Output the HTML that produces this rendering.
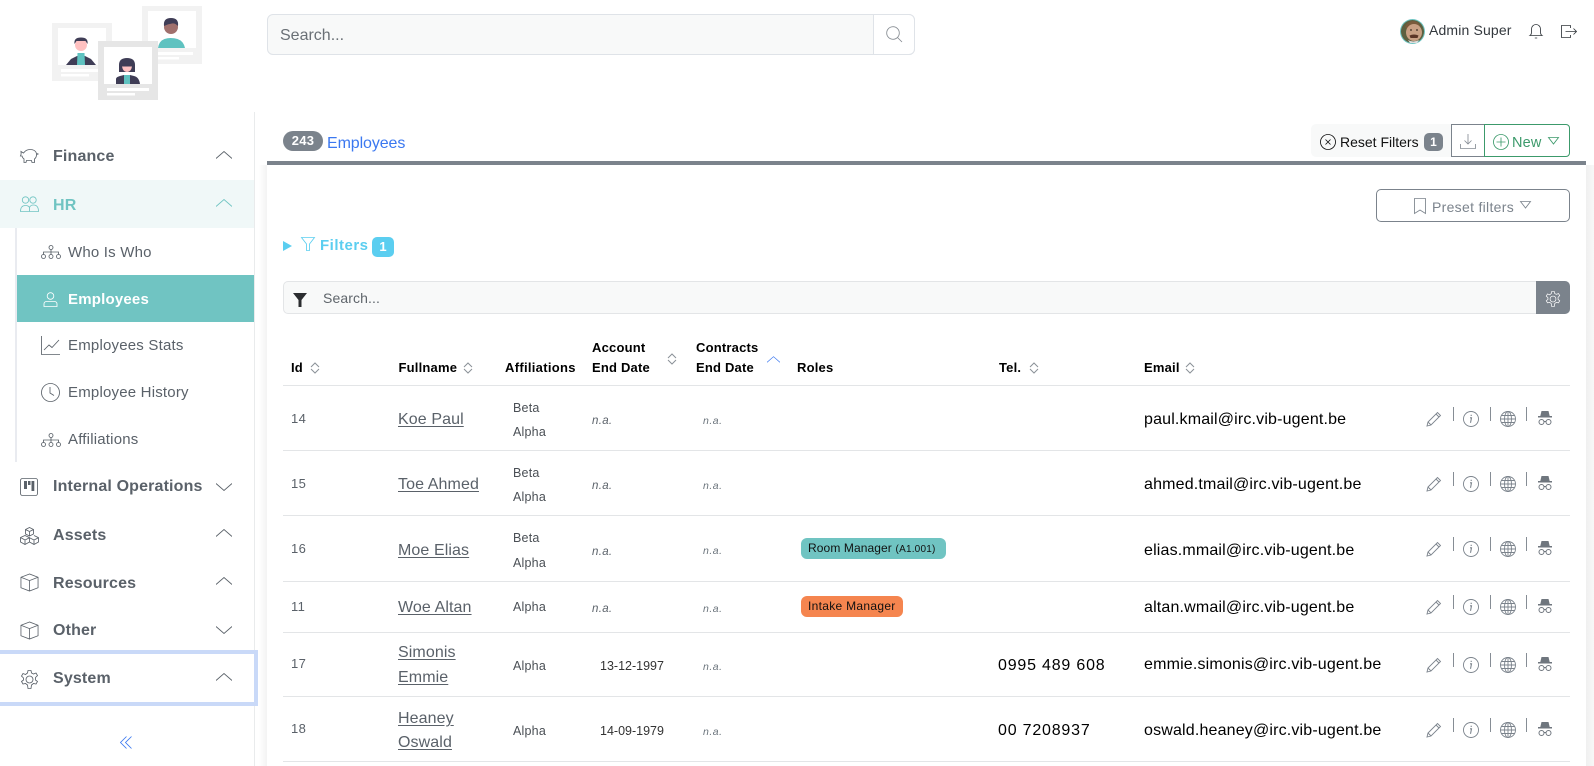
<!DOCTYPE html>
<html lang="en"><head><meta charset="utf-8"><title>Employees</title>
<style>
*{box-sizing:border-box}
html,body{margin:0;padding:0;background:#fff}
body{width:1594px;height:766px;overflow:hidden;position:relative;font-family:"Liberation Sans",sans-serif;color:#000}
.a{position:absolute}
.t{position:absolute;white-space:nowrap;line-height:20px;height:20px}
svg.i{position:absolute;fill:none;stroke:currentColor;stroke-width:.85;overflow:visible}
.m{font-weight:700;font-size:16px;color:#5a6169;left:53px;letter-spacing:.15px;transform:translateY(1px)}
.s{font-size:15px;color:#5a6169;left:68px;letter-spacing:.2px;transform:translateY(1px)}
.h{font-weight:700;font-size:13px;color:#000;letter-spacing:.2px}
.id{font-size:13px;color:#5a6169;left:291px;letter-spacing:.4px}
.n{font-size:16px;color:#5a6169;left:398px;text-decoration:underline;text-underline-offset:2px;letter-spacing:.1px;transform:translateY(1px)}
.af{font-size:12.5px;color:#4a4f55;left:513px;letter-spacing:.2px}
.na{font-size:11.5px;font-style:italic;color:#5a6169;left:592px;letter-spacing:.3px;transform:translateY(1px)}
.na2{font-size:10.5px;font-style:italic;color:#6c757d;left:703px;letter-spacing:.5px}
.d{font-size:12.5px;color:#333;left:600px;letter-spacing:0;transform:translateY(1px)}
.e{font-size:16px;color:#000;left:1144px;letter-spacing:.17px;transform:translateY(1px)}
.tel{font-size:16px;color:#000;left:998px;letter-spacing:.8px;transform:translateY(1px)}
.ln{position:absolute;left:283px;width:1287px;height:1px;background:#e3e5e7}
.sp{position:absolute;width:1px;height:14px;background:#868d95}
.b{position:absolute;left:801px;height:21px;border-radius:6px;font-size:12px;line-height:21px;padding-left:7px;color:#111;white-space:nowrap;letter-spacing:.3px}
</style></head><body>
<svg width="0" height="0" style="position:absolute">
<defs>
<symbol id="up" viewBox="0 0 16 8"><path d="M0 7.500 8 .5l8 7" fill="none" stroke="currentColor"/></symbol>
<symbol id="dn" viewBox="0 0 16 8"><path d="M0 .5l8 7 8-7" fill="none" stroke="currentColor"/></symbol>
<symbol id="sort" viewBox="0 0 10 12"><path d="M1 5 5 1l4 4M1 7l4 4 4-4" fill="none" stroke="#8b9197"/></symbol>
<symbol id="org" viewBox="0 0 20 14"><g fill="none" stroke="currentColor"><circle cx="10" cy="2.500" r="2"/><circle cx="2.500" cy="11.500" r="2"/><circle cx="10" cy="11.500" r="2"/><circle cx="17.500" cy="11.500" r="2"/><path d="M10 4.500v5M2.500 9.500V7h15v2.500"/></g></symbol>
<symbol id="box" viewBox="0 0 20 20"><path d="M10 1 1 4.500v11L10 19l9-3.500v-11zM1 4.500 10 8l9-3.500M10 8v11" fill="none" stroke="currentColor"/></symbol>
<symbol id="pen" viewBox="0 0 16 16"><path d="M1 15l1-4L11.500 1.500l3 3L5 14zM2 11l3 3M10 3l3 3" fill="none" stroke="#7b838c" stroke-width=".9"/></symbol>
<symbol id="inf" viewBox="0 0 16 16"><circle cx="8" cy="8" r="7.500" fill="none" stroke="#7b838c" stroke-width=".9"/><path d="M7 6.800h1.500L7.500 11.800M8.200 3.800v1.200" fill="none" stroke="#7b838c" stroke-width="1.100"/></symbol>
<symbol id="glb" viewBox="0 0 16 16"><g fill="none" stroke="#7b838c" stroke-width=".9"><circle cx="8" cy="8" r="7.500"/><ellipse cx="8" cy="8" rx="3.500" ry="7.500"/><path d="M8 .5v15M.5 8h15M1.500 4.500h13M1.500 11.500h13"/></g></symbol>
<symbol id="spy" viewBox="0 0 14 14"><path d="M3.500 0h7l1.200 5H14v1.500H0V5h2.300z" fill="#6f767e"/><g fill="none" stroke="#6f767e"><circle cx="3.500" cy="11" r="2.500"/><circle cx="10.500" cy="11" r="2.500"/><path d="M6 10.500h2"/></g></symbol>
</defs></svg>

<!-- logo -->
<svg class="a" style="left:52px;top:6px;filter:blur(.35px)" width="152" height="96" viewBox="0 0 152 96">
<rect x="90" y="0" width="60" height="58" fill="#f2f2f2"/><rect x="96" y="5" width="48" height="37" fill="#fff"/>
<rect x="96" y="46" width="45" height="3" fill="#fff"/><rect x="96" y="51" width="31" height="2.500" fill="#fff"/>
<circle cx="119" cy="21" r="7" fill="#a0706d"/><path d="M112 20q-1-8 7-8t7 8q-3-3-6-2.500-4 .5-8 2.500z" fill="#3f3d56"/>
<path d="M106 42q1-7 6.500-9 3-1 6-1 4 0 7 1 6 2 7.500 9z" fill="#5fc2c0"/>
<rect x="0" y="17" width="60" height="58" fill="#f2f2f2"/><rect x="6" y="22" width="48" height="37" fill="#fff"/>
<rect x="9" y="63" width="41" height="3" fill="#fff"/><rect x="9" y="68" width="28" height="2.500" fill="#fff"/>
<circle cx="29" cy="39" r="6" fill="#ffc1c1"/><path d="M22.500 38q-1-6.500 6.500-6.500t6.500 6.500l-2-3h-9z" fill="#3f3d56"/>
<path d="M14 59l5-6 6-3h8l6 3 5 6z" fill="#3f3d56"/><path d="M25.500 47h7l.5 12h-8z" fill="#5fc2c0"/>
<rect x="46" y="35" width="60" height="59" fill="#e6e6e6"/><rect x="52" y="41" width="48" height="37" fill="#fff"/>
<rect x="55" y="82" width="42" height="3" fill="#fff"/><rect x="55" y="87" width="28" height="2.500" fill="#fff"/>
<path d="M67 66V59q0-7 8-7t8 7v7z" fill="#3f3d56"/><path d="M70 60.500h10q-1 5.500-5 5.500t-5-5.500z" fill="#ffc1c1"/>
<path d="M64 78v-5q0-2 4-3l4-1h6l4 1q5 1 6 8z" fill="#3f3d56"/><rect x="72" y="69" width="6" height="9" fill="#5fc2c0"/>
</svg>

<!-- top search -->
<div class="a" style="left:267px;top:14px;width:648px;height:41px;background:#f8f9f9;border:1px solid #dfe3e8;border-radius:6px"></div>
<div class="a" style="left:873px;top:14px;width:42px;height:41px;background:#fff;border:1px solid #dfe3e8;border-radius:0 6px 6px 0"></div>
<span class="t" style="left:280px;top:25px;font-size:16px;color:#6a7076;letter-spacing:0;transform:translateY(1px)">Search...</span>
<svg class="i" style="left:886px;top:26px;color:#858b91" width="17" height="17" viewBox="0 0 17 17"><circle cx="7" cy="7" r="6.300"/><path d="M11.500 11.500 16 16"/></svg>

<!-- user -->
<svg class="a" style="left:1400px;top:19px" width="25" height="25" viewBox="0 0 25 25"><circle cx="12.500" cy="12.500" r="12.500" fill="#6fc4c2"/><circle cx="12.500" cy="12.500" r="11.500" fill="#5d6040"/><path d="M5 8q3-6 8-6t7 5l-2 3H7z" fill="#7a5a3c"/><ellipse cx="14" cy="13.500" rx="8" ry="8.500" fill="#c9a084"/><path d="M9.500 16.500q4.500-2 9 0l-1 2.500h-7z" fill="#5c3526"/><path d="M8 21q5 3 11 0l-2 3H10z" fill="#ddd"/><circle cx="11" cy="11" r=".9" fill="#3a2a20"/><circle cx="17" cy="11" r=".9" fill="#3a2a20"/></svg>
<span class="t" style="left:1429px;top:20px;font-size:14px;color:#33383d;letter-spacing:.15px">Admin Super</span>
<svg class="i" style="left:1529px;top:23px;color:#33383d" width="14" height="16" viewBox="0 0 14 16"><path d="M1 12.500q1.500-1 1.500-3.500V6a4.500 4.500 0 0 1 9 0v3q0 2.500 1.500 3.500zM5.800 15h2.400"/></svg>
<svg class="i" style="left:1561px;top:25px;color:#33383d" width="16" height="13" viewBox="0 0 16 13"><path d="M9.500 3V.5h-9v12h9V10M4.500 6.500h11M12.500 3.500l3 3-3 3"/></svg>

<!-- sidebar -->
<div class="a" style="left:254px;top:112px;width:1px;height:654px;background:#e9ebec"></div>
<div class="a" style="left:0;top:180px;width:254px;height:48px;background:#f0f8f8"></div>
<div class="a" style="left:15px;top:228px;width:2px;height:234px;background:#e9ebf0"></div>
<div class="a" style="left:17px;top:275px;width:237px;height:47px;background:#70c4c2"></div>
<div class="a" style="left:-4px;top:650px;width:262px;height:56px;border:4px solid #c9d9f8"></div>

<svg class="i" style="left:20px;top:148px;color:#5a6169" width="19" height="16" viewBox="0 0 19 16"><path d="M1 3.500 3.500 5Q6 1.500 10 1.500q5.500 0 6.500 4l2 .5-2 .5q0 3-2 4.500v3.500h-2.500l-.5-2h-5l-.5 2H4V11Q2.500 10 2 8H.5q1-2 .5-4.500z"/></svg>
<span class="t m" style="top:146px">Finance</span>
<svg class="i" style="left:216px;top:151px;color:#5a6169" width="16" height="8"><use href="#up"/></svg>

<svg class="i" style="left:20px;top:196px;color:#70c4c2" width="19" height="16" viewBox="0 0 19 16"><circle cx="5.500" cy="4" r="3.200"/><circle cx="13" cy="4" r="3.200"/><path d="M.5 15.500q0-6 5-6 3 0 4 2 1-2.500 4-2.500 5 0 5 6.500zM9.500 11.500v4"/></svg>
<span class="t m" style="top:195px;color:#70c4c2">HR</span>
<svg class="i" style="left:216px;top:199px;color:#70c4c2" width="16" height="8"><use href="#up"/></svg>

<svg class="i" style="left:41px;top:245px;color:#5a6169" width="20" height="14"><use href="#org"/></svg>
<span class="t s" style="top:242px">Who Is Who</span>
<svg class="i" style="left:43px;top:292px;color:#fff" width="15" height="15" viewBox="0 0 15 15"><circle cx="7.500" cy="4" r="3.300"/><path d="M1 14.500V12q0-2.500 3-2.500h7q3 0 3 2.500v2.500z"/></svg>
<span class="t s" style="top:289px;color:#fff;font-weight:700;letter-spacing:.2px">Employees</span>
<svg class="i" style="left:41px;top:336px;color:#5a6169" width="19" height="19" viewBox="0 0 19 19"><path d="M.5 0v18.500H19M3 14l5-5 3 2.500L18 4"/></svg>
<span class="t s" style="top:335px">Employees Stats</span>
<svg class="i" style="left:41px;top:383px;color:#5a6169" width="19" height="19" viewBox="0 0 19 19"><circle cx="9.500" cy="9.500" r="9"/><path d="M9 4v6l4 2.500"/></svg>
<span class="t s" style="top:382px">Employee History</span>
<svg class="i" style="left:41px;top:433px;color:#5a6169" width="20" height="14"><use href="#org"/></svg>
<span class="t s" style="top:429px">Affiliations</span>

<svg class="i" style="left:20px;top:478px;color:#5a6169" width="18" height="18" viewBox="0 0 18 18"><rect x=".5" y=".5" width="17" height="17" rx="2"/><path d="M4 3h3v8H4zM8 3h2.500v4H8zM11.500 3h2.800v10h-2.800z" fill="currentColor" stroke="none"/></svg>
<span class="t m" style="top:476px">Internal Operations</span>
<svg class="i" style="left:216px;top:483px;color:#5a6169" width="16" height="8"><use href="#dn"/></svg>

<svg class="i" style="left:20px;top:527px;color:#5a6169" width="19" height="18" viewBox="0 0 19 18"><path d="M9.500.5l4 2v4.500l-4 2-4-2V2.500zM5.500 2.500l4 2 4-2M9.500 4.500V9M5 8.500l4.500 2.200V15L5 17.500.5 15v-4.500zM.5 10.500 5 13l4.500-2.300M5 13v4.500M14 8.500l4.500 2.200V15L14 17.500 9.500 15M9.500 10.700 14 13l4.500-2.300M14 13v4.500"/></svg>
<span class="t m" style="top:525px">Assets</span>
<svg class="i" style="left:216px;top:529px;color:#5a6169" width="16" height="8"><use href="#up"/></svg>

<svg class="i" style="left:20px;top:573px;color:#5a6169" width="19" height="19"><use href="#box"/></svg>
<span class="t m" style="top:573px">Resources</span>
<svg class="i" style="left:216px;top:577px;color:#5a6169" width="16" height="8"><use href="#up"/></svg>

<svg class="i" style="left:20px;top:621px;color:#5a6169" width="19" height="19"><use href="#box"/></svg>
<span class="t m" style="top:620px">Other</span>
<svg class="i" style="left:216px;top:626px;color:#5a6169" width="16" height="8"><use href="#dn"/></svg>

<svg class="i" style="left:20px;top:670px;color:#5a6169" width="19" height="19" viewBox="0 0 19 19"><circle cx="9.500" cy="9.500" r="3.500"/><path d="M8 .5h3l.5 2.500 2 1 2.500-1 1.500 2.500-2 2v2.500l2 1.500L16 14l-2.500-.5-2 1.500-.5 3.500H8L7.500 15l-2-1.500L3 14l-1.500-2.500 2-1.500V8l-2-2L3 3.500l2.500 1 2-1.500z"/></svg>
<span class="t m" style="top:668px">System</span>
<svg class="i" style="left:216px;top:673px;color:#5a6169" width="16" height="8"><use href="#up"/></svg>

<svg class="i" style="left:120px;top:736px;color:#3b78f0" width="12" height="13" viewBox="0 0 12 13"><path d="M6.500.5.500 6.500l6 6M11.500.5l-6 6 6 6"/></svg>

<!-- title bar -->
<div class="a" style="left:283px;top:131px;width:40px;height:20px;border-radius:10px;background:#7b838c;color:#fff;font-weight:700;font-size:13px;line-height:20px;text-align:center;letter-spacing:.3px">243</div>
<span class="t" style="left:327px;top:134px;font-size:16px;color:#3b78f0;letter-spacing:-.1px">Employees</span>

<div class="a" style="left:1311px;top:124px;width:140px;height:33px;background:#f8f9f9;border-radius:5px 0 0 5px"></div>
<svg class="i" style="left:1320px;top:134px;color:#111" width="16" height="16" viewBox="0 0 16 16"><circle cx="8" cy="8" r="7.500"/><path d="M5.500 5.500l5 5M10.500 5.500l-5 5"/></svg>
<span class="t" style="left:1340px;top:132px;font-size:14px;color:#111;letter-spacing:0">Reset Filters</span>
<div class="a" style="left:1424px;top:133px;width:19px;height:18px;background:#7b838c;border-radius:5px;color:#fff;font-size:12px;font-weight:700;line-height:18px;text-align:center">1</div>
<div class="a" style="left:1451px;top:124px;width:34px;height:33px;border:1px solid #7b838c;border-right:0"></div>
<svg class="i" style="left:1460px;top:134px;color:#868d95" width="16" height="15" viewBox="0 0 16 15"><path d="M8 0v10M4.500 6.500 8 10l3.500-3.500M.5 10v4.500h15V10"/></svg>
<div class="a" style="left:1484px;top:124px;width:86px;height:33px;border:1px solid #3c9a6b;border-radius:0 4px 4px 0"></div>
<svg class="i" style="left:1493px;top:134px;color:#3c9a6b" width="16" height="16" viewBox="0 0 16 16"><circle cx="8" cy="8" r="7.500"/><path d="M8 3.500v9M3.500 8h9"/></svg>
<span class="t" style="left:1512px;top:133px;font-size:14.500px;color:#3c9a6b;letter-spacing:.2px">New</span>
<svg class="i" style="left:1548px;top:137px;color:#3c9a6b" width="11" height="8" viewBox="0 0 11 8"><path d="M.5.500h10L5.500 7z"/></svg>

<div class="a" style="left:1586px;top:165px;width:8px;height:601px;background:linear-gradient(90deg,#f0f0f0,#f7f7f7)"></div>
<div class="a" style="left:259px;top:165px;width:8px;height:601px;background:linear-gradient(90deg,#fff,#f3f3f3)"></div>
<div class="a" style="left:267px;top:161px;width:1319px;height:4px;background:#7b838c"></div>

<!-- preset -->
<div class="a" style="left:1376px;top:189px;width:194px;height:33px;border:1px solid #7b838c;border-radius:5px"></div>
<svg class="i" style="left:1414px;top:198px;color:#7b838c" width="12" height="16" viewBox="0 0 12 16"><path d="M.5.500h11v15L6 12 .5 15.500z"/></svg>
<span class="t" style="left:1432px;top:197px;font-size:14px;color:#7b838c;letter-spacing:.3px">Preset filters</span>
<svg class="i" style="left:1520px;top:201px;color:#7b838c" width="11" height="8" viewBox="0 0 11 8"><path d="M.5.500h10L5.500 7z"/></svg>

<!-- filters -->
<svg class="a" style="left:283px;top:241px" width="10" height="10" viewBox="0 0 10 10"><path d="M0 0l9 5-9 5z" fill="#5bcef0"/></svg>
<svg class="i" style="left:301px;top:237px;color:#5bcef0" width="14" height="14" viewBox="0 0 14 14"><path d="M.5.500h13L8.500 7v6.500h-3V7z"/></svg>
<span class="t" style="left:320px;top:236px;font-size:15px;font-weight:700;color:#5bcef0;letter-spacing:.5px">Filters</span>
<div class="a" style="left:372px;top:237px;width:22px;height:20px;background:#5bcef0;border-radius:5px;color:#fff;font-size:13px;font-weight:700;line-height:20px;text-align:center">1</div>

<div class="a" style="left:283px;top:281px;width:1287px;height:33px;background:#f8f9f9;border:1px solid #e3e5e7;border-radius:5px"></div>
<svg class="a" style="left:293px;top:293px" width="14" height="14" viewBox="0 0 14 14"><path d="M0 0h14L8.500 7v7h-3V7z" fill="#2b2d30"/></svg>
<span class="t" style="left:323px;top:288px;font-size:14px;color:#5f656b;letter-spacing:.1px">Search...</span>
<div class="a" style="left:1536px;top:281px;width:34px;height:33px;background:#7b838c;border-radius:0 5px 5px 0"></div>
<svg class="i" style="left:1545px;top:291px;color:#fff" width="16" height="16" viewBox="0 0 19 19"><circle cx="9.500" cy="9.500" r="3.500"/><path d="M8 .5h3l.5 2.500 2 1 2.500-1 1.500 2.500-2 2v2.500l2 1.500L16 14l-2.500-.5-2 1.500-.5 3.500H8L7.500 15l-2-1.500L3 14l-1.500-2.500 2-1.500V8l-2-2L3 3.500l2.500 1 2-1.500z"/></svg>

<!-- table head -->
<span class="t h" style="left:291px;top:358px">Id</span><svg class="a" style="left:310px;top:362px" width="10" height="12"><use href="#sort"/></svg>
<span class="t h" style="left:398.500px;top:358px">Fullname</span><svg class="a" style="left:463px;top:362px" width="10" height="12"><use href="#sort"/></svg>
<span class="t h" style="left:505px;top:358px;letter-spacing:.3px">Affiliations</span>
<span class="t h" style="left:592px;top:338px">Account</span><span class="t h" style="left:592px;top:358px">End Date</span><svg class="a" style="left:667px;top:353px" width="10" height="12"><use href="#sort"/></svg>
<span class="t h" style="left:696px;top:338px">Contracts</span><span class="t h" style="left:696px;top:358px">End Date</span>
<svg class="i" style="left:767px;top:356px;color:#3b78f0" width="13" height="7"><use href="#up"/></svg>
<span class="t h" style="left:797px;top:358px">Roles</span>
<span class="t h" style="left:999px;top:358px">Tel.</span><svg class="a" style="left:1029px;top:362px" width="10" height="12"><use href="#sort"/></svg>
<span class="t h" style="left:1144px;top:358px">Email</span><svg class="a" style="left:1185px;top:362px" width="10" height="12"><use href="#sort"/></svg>
<div class="ln" style="top:385px"></div>

<!-- row 14 -->
<span class="t id" style="top:409px">14</span><span class="t n" style="top:409px">Koe Paul</span>
<span class="t af" style="top:398px">Beta</span><span class="t af" style="top:422px">Alpha</span>
<span class="t na" style="top:410px">n.a.</span><span class="t na2" style="top:411px">n.a.</span>
<span class="t e" style="top:409px">paul.kmail@irc.vib-ugent.be</span>
<svg class="a" style="left:1426px;top:411px" width="16" height="16"><use href="#pen"/></svg><div class="sp" style="left:1453px;top:407px"></div>
<svg class="a" style="left:1463px;top:411px" width="16" height="16"><use href="#inf"/></svg><div class="sp" style="left:1490px;top:407px"></div>
<svg class="a" style="left:1500px;top:411px" width="16" height="16"><use href="#glb"/></svg><div class="sp" style="left:1526px;top:407px"></div>
<svg class="a" style="left:1538px;top:411px" width="14" height="14"><use href="#spy"/></svg>
<div class="ln" style="top:450px"></div>

<!-- row 15 -->
<span class="t id" style="top:474px">15</span><span class="t n" style="top:474px">Toe Ahmed</span>
<span class="t af" style="top:463px">Beta</span><span class="t af" style="top:487px">Alpha</span>
<span class="t na" style="top:475px">n.a.</span><span class="t na2" style="top:476px">n.a.</span>
<span class="t e" style="top:474px">ahmed.tmail@irc.vib-ugent.be</span>
<svg class="a" style="left:1426px;top:476px" width="16" height="16"><use href="#pen"/></svg><div class="sp" style="left:1453px;top:472px"></div>
<svg class="a" style="left:1463px;top:476px" width="16" height="16"><use href="#inf"/></svg><div class="sp" style="left:1490px;top:472px"></div>
<svg class="a" style="left:1500px;top:476px" width="16" height="16"><use href="#glb"/></svg><div class="sp" style="left:1526px;top:472px"></div>
<svg class="a" style="left:1538px;top:476px" width="14" height="14"><use href="#spy"/></svg>
<div class="ln" style="top:515px"></div>

<!-- row 16 -->
<span class="t id" style="top:539px">16</span><span class="t n" style="top:540px">Moe Elias</span>
<span class="t af" style="top:528px">Beta</span><span class="t af" style="top:553px">Alpha</span>
<span class="t na" style="top:541px">n.a.</span><span class="t na2" style="top:541px">n.a.</span>
<div class="b" style="top:538px;width:145px;background:#70c4c2"><span style="letter-spacing:.1px">Room Manager</span> <span style="font-size:10px;letter-spacing:.2px">(A1.001)</span></div>
<span class="t e" style="top:540px">elias.mmail@irc.vib-ugent.be</span>
<svg class="a" style="left:1426px;top:541px" width="16" height="16"><use href="#pen"/></svg><div class="sp" style="left:1453px;top:537px"></div>
<svg class="a" style="left:1463px;top:541px" width="16" height="16"><use href="#inf"/></svg><div class="sp" style="left:1490px;top:537px"></div>
<svg class="a" style="left:1500px;top:541px" width="16" height="16"><use href="#glb"/></svg><div class="sp" style="left:1526px;top:537px"></div>
<svg class="a" style="left:1538px;top:541px" width="14" height="14"><use href="#spy"/></svg>
<div class="ln" style="top:581px"></div>

<!-- row 11 -->
<span class="t id" style="top:597px">11</span><span class="t n" style="top:597px">Woe Altan</span>
<span class="t af" style="top:597px">Alpha</span>
<span class="t na" style="top:598px">n.a.</span><span class="t na2" style="top:599px">n.a.</span>
<div class="b" style="top:596px;width:102px;background:#f5854f">Intake Manager</div>
<span class="t e" style="top:597px">altan.wmail@irc.vib-ugent.be</span>
<svg class="a" style="left:1426px;top:599px" width="16" height="16"><use href="#pen"/></svg><div class="sp" style="left:1453px;top:595px"></div>
<svg class="a" style="left:1463px;top:599px" width="16" height="16"><use href="#inf"/></svg><div class="sp" style="left:1490px;top:595px"></div>
<svg class="a" style="left:1500px;top:599px" width="16" height="16"><use href="#glb"/></svg><div class="sp" style="left:1526px;top:595px"></div>
<svg class="a" style="left:1538px;top:599px" width="14" height="14"><use href="#spy"/></svg>
<div class="ln" style="top:632px"></div>

<!-- row 17 -->
<span class="t id" style="top:654px">17</span><span class="t n" style="top:642px">Simonis</span><span class="t n" style="top:667px">Emmie</span>
<span class="t af" style="top:656px">Alpha</span>
<span class="t d" style="top:655px">13-12-1997</span><span class="t na2" style="top:657px">n.a.</span>
<span class="t tel" style="top:655px">0995 489 608</span>
<span class="t e" style="top:654px">emmie.simonis@irc.vib-ugent.be</span>
<svg class="a" style="left:1426px;top:657px" width="16" height="16"><use href="#pen"/></svg><div class="sp" style="left:1453px;top:653px"></div>
<svg class="a" style="left:1463px;top:657px" width="16" height="16"><use href="#inf"/></svg><div class="sp" style="left:1490px;top:653px"></div>
<svg class="a" style="left:1500px;top:657px" width="16" height="16"><use href="#glb"/></svg><div class="sp" style="left:1526px;top:653px"></div>
<svg class="a" style="left:1538px;top:657px" width="14" height="14"><use href="#spy"/></svg>
<div class="ln" style="top:696px"></div>

<!-- row 18 -->
<span class="t id" style="top:719px">18</span><span class="t n" style="top:708px">Heaney</span><span class="t n" style="top:732px">Oswald</span>
<span class="t af" style="top:721px">Alpha</span>
<span class="t d" style="top:720px">14-09-1979</span><span class="t na2" style="top:722px">n.a.</span>
<span class="t tel" style="top:720px">00 7208937</span>
<span class="t e" style="top:720px">oswald.heaney@irc.vib-ugent.be</span>
<svg class="a" style="left:1426px;top:722px" width="16" height="16"><use href="#pen"/></svg><div class="sp" style="left:1453px;top:718px"></div>
<svg class="a" style="left:1463px;top:722px" width="16" height="16"><use href="#inf"/></svg><div class="sp" style="left:1490px;top:718px"></div>
<svg class="a" style="left:1500px;top:722px" width="16" height="16"><use href="#glb"/></svg><div class="sp" style="left:1526px;top:718px"></div>
<svg class="a" style="left:1538px;top:722px" width="14" height="14"><use href="#spy"/></svg>
<div class="ln" style="top:761px"></div>
</body></html>
